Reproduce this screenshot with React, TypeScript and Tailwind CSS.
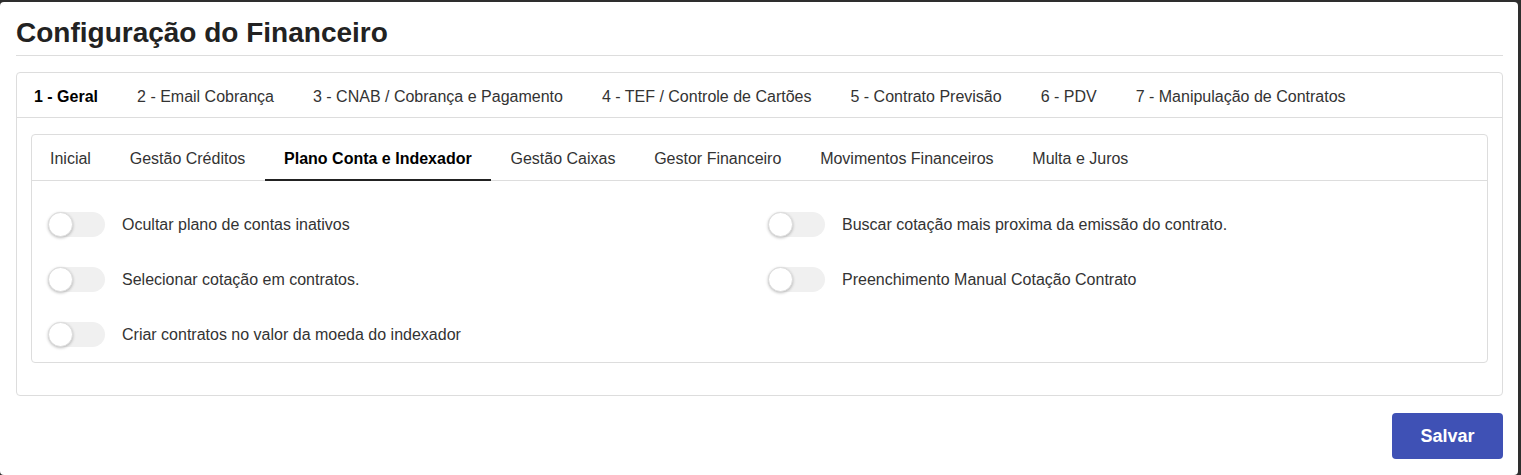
import React from "react";

const mainTabs = [
    "1 - Geral",
    "2 - Email Cobrança",
    "3 - CNAB / Cobrança e Pagamento",
    "4 - TEF / Controle de Cartões",
    "5 - Contrato Previsão",
    "6 - PDV",
    "7 - Manipulação de Contratos",
]

const subTabs = [
    "Inicial",
    "Gestão Créditos",
    "Plano Conta e Indexador",
    "Gestão Caixas",
    "Gestor Financeiro",
    "Movimentos Financeiros",
    "Multa e Juros",
]

function Toggle({label}: { label: string }) {
    const [on, setOn] = React.useState(false)
    return (
        <div className="flex h-[55px] items-center">
            <button
                type="button"
                onClick={() => setOn(!on)}
                className={"relative h-[25px] w-[57px] shrink-0 rounded-full " + (on ? "bg-[#9fa8da]" : "bg-[#f0f0f0]")}
            >
                <span
                    className={"absolute top-0 h-[25px] w-[25px] rounded-full border border-[#dcdcdc] bg-white shadow-[0_1px_3px_rgba(0,0,0,0.25)] " + (on ? "left-[32px]" : "left-0")}
                />
            </button>
            <span className="ml-[17px] text-[16px] text-[#333]">{label}</span>
        </div>
    )
}

export default function App() {
    const [tab, setTab] = React.useState(0)
    const [sub, setSub] = React.useState(2)

    return (
        <div className="h-[475px] bg-[#2e2e2e] pt-[2px] pr-[3px]" style={{fontFamily: '"Liberation Sans", Arial, sans-serif'}}>
            <div className="h-full rounded-[4px] bg-white pl-4 pr-[15px] pt-[15px]">
                <div className="border-b border-[#dddddd] pb-[6px]">
                    <h1 className="text-[28px] font-bold leading-[32px] text-[#222]">Configuração do Financeiro</h1>
                </div>

                <div className="mt-4 rounded-[4px] border border-[#dddddd]">
                    <div className="flex border-b border-[#dddddd]">
                        {mainTabs.map((t, i) => (
                            <button
                                key={t}
                                onClick={() => setTab(i)}
                                className={"px-[19.5px] pb-[10px] pt-[14px] text-[16px] leading-5 " + (i === 0 ? "pl-[17px] " : "") + (tab === i ? "font-bold text-black" : "text-[#333]")}
                            >
                                {t}
                            </button>
                        ))}
                    </div>

                    <div className="px-[14px] pb-8 pt-4">
                        <div className="rounded-[4px] border border-[#dddddd]">
                            <div className="flex border-b border-[#dddddd]">
                                {subTabs.map((t, i) => (
                                    <button
                                        key={t}
                                        onClick={() => setSub(i)}
                                        className={"-mb-px border-b-2 px-[19.4px] pb-[10px] pt-[14px] text-[16px] leading-5 " + (i === 0 ? "pl-[18px] " : "") + (sub === i ? "border-[#222] font-bold text-black" : "border-transparent text-[#333]")}
                                    >
                                        {t}
                                    </button>
                                ))}
                            </div>
                            <div className="grid grid-cols-[720px_1fr] pl-4 pt-4">
                                <div>
                                    <Toggle label="Ocultar plano de contas inativos"/>
                                    <Toggle label="Selecionar cotação em contratos."/>
                                    <Toggle label="Criar contratos no valor da moeda do indexador"/>
                                </div>
                                <div>
                                    <Toggle label="Buscar cotação mais proxima da emissão do contrato."/>
                                    <Toggle label="Preenchimento Manual Cotação Contrato"/>
                                </div>
                            </div>
                        </div>
                    </div>
                </div>

                <div className="mt-[17px] flex justify-end">
                    <button className="h-[46px] w-[111px] rounded-[4px] bg-[#3f51b5] text-[18px] font-bold text-white">
                        Salvar
                    </button>
                </div>
            </div>
        </div>
    )
}
